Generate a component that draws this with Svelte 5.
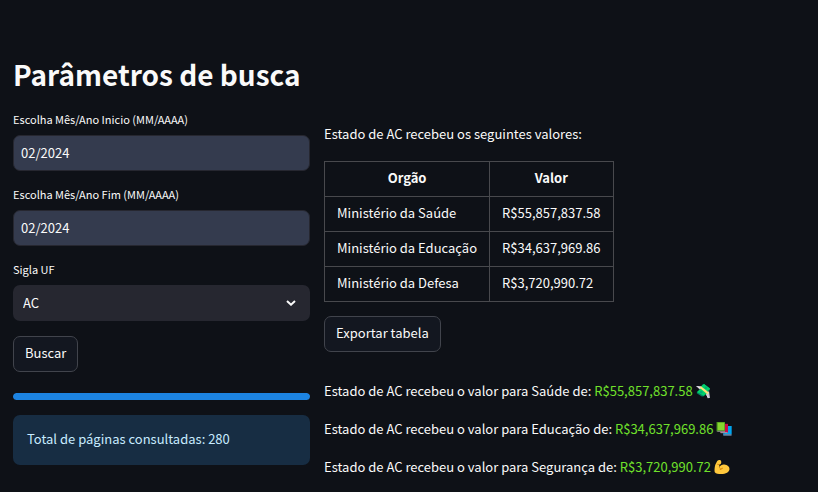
<script lang="ts">
	interface Orgao {
		nome: string;
		area: string;
		valor: number;
		icone: 'dinheiro' | 'livros' | 'braco';
	}

	const ufs = ['AC', 'AL', 'AM', 'AP', 'BA', 'CE', 'DF', 'ES', 'GO', 'MA', 'MG', 'MS', 'MT', 'PA', 'PB', 'PE', 'PI', 'PR', 'RJ', 'RN', 'RO', 'RR', 'RS', 'SC', 'SE', 'SP', 'TO'];

	const orgaos: Orgao[] = [
		{ nome: 'Ministério da Saúde', area: 'Saúde', valor: 55857837.58, icone: 'dinheiro' },
		{ nome: 'Ministério da Educação', area: 'Educação', valor: 34637969.86, icone: 'livros' },
		{ nome: 'Ministério da Defesa', area: 'Segurança', valor: 3720990.72, icone: 'braco' }
	];

	let inicio = $state('02/2024');
	let fim = $state('02/2024');
	let uf = $state('AC');
	let progresso = $state(100);
	let paginas = $state(280);

	function formatar(valor: number): string {
		return 'R$' + valor.toLocaleString('en-US', { minimumFractionDigits: 2 });
	}
</script>

<main class="page">
	<h1>Parâmetros de busca</h1>

	<div class="columns">
		<section class="search">
			<div class="field">
				<label for="inicio">Escolha Mês/Ano Inicio (MM/AAAA)</label>
				<input id="inicio" type="text" bind:value={inicio} />
			</div>

			<div class="field">
				<label for="fim">Escolha Mês/Ano Fim (MM/AAAA)</label>
				<input id="fim" type="text" bind:value={fim} />
			</div>

			<div class="field">
				<label for="uf">Sigla UF</label>
				<div class="select">
					<select id="uf" bind:value={uf}>
						{#each ufs as sigla}
							<option value={sigla}>{sigla}</option>
						{/each}
					</select>
					<svg class="chevron" viewBox="0 0 10 6" aria-hidden="true">
						<path d="M1 1l4 3.7L9 1" />
					</svg>
				</div>
			</div>

			<button type="button">Buscar</button>

			<div class="progress">
				<div class="bar" style="width: {progresso}%"></div>
			</div>

			<div class="alert">Total de páginas consultadas: {paginas}</div>
		</section>

		<section class="results">
			<p class="intro">Estado de {uf} recebeu os seguintes valores:</p>

			<table>
				<thead>
					<tr>
						<th>Orgão</th>
						<th>Valor</th>
					</tr>
				</thead>
				<tbody>
					{#each orgaos as orgao}
						<tr>
							<td>{orgao.nome}</td>
							<td>{formatar(orgao.valor)}</td>
						</tr>
					{/each}
				</tbody>
			</table>

			<button type="button">Exportar tabela</button>

			<div class="summary">
				{#each orgaos as orgao}
					<p>
						Estado de {uf} recebeu o valor para {orgao.area} de: <span class="value">{formatar(orgao.valor)}</span>
						{#if orgao.icone === 'dinheiro'}
							<svg class="emoji" viewBox="0 0 16 16" aria-hidden="true">
								<path fill="#c9c5d4" d="M0 3l6 .3 2 2-4 1.5zM9 10l4-2 1 7-2-.3z" />
								<path fill="#f3f0f7" d="M0 3l5 1.2-1 1zM10 11l3 4-1.2.2z" />
								<path fill="#008463" d="M6.5 1.5L8 1l6 4.4v1.4l-3 3.2-6-5z" />
								<path fill="#00d26a" d="M6.3 2.2L8 1l6 4.4-2.7 3.2-6-4z" />
								<path fill="#008463" d="M.8 9.5l4-3.7 6 4.8-3 2.6-2 .2-5-3.1z" />
								<path fill="#00d26a" d="M1 9l3.8-3.4 6 4.6-3.3 2.6z" />
								<path fill="#f9e37a" d="M3.3 4.6l2-1.2 7.3 5.9-1 2.1z" />
								<circle cx="9.8" cy="4.7" r="1.2" fill="#00a878" />
								<circle cx="5.2" cy="9.3" r="1.3" fill="#00a878" />
							</svg>
						{:else if orgao.icone === 'livros'}
							<svg class="emoji" viewBox="0 0 16 16" aria-hidden="true">
								<path fill="#0074ba" d="M7 5h8.5v9.5H7z" />
								<path fill="#00a6ed" d="M8.5 5h7v8h-7z" />
								<path fill="#8f8c9c" d="M7.5 13.3h8v1.2h-8z" />
								<path fill="#990838" d="M4 2.8h8v9.2H4z" />
								<path fill="#ca0b4a" d="M6 3h6v8.3H6z" />
								<path fill="#998ea4" d="M4.5 11h7.2v1.2H4.5z" />
								<path fill="#44911b" d="M.5 1H9v9.5H.5z" />
								<path fill="#86d72f" d="M1.6 1.6h6.8v7.6H1.6z" />
								<path fill="#998ea4" d="M1.3 9.8H9v.9H1.3z" />
							</svg>
						{:else}
							<svg class="emoji" viewBox="0 0 16 16" aria-hidden="true">
								<path
									fill="#ffc83d"
									d="M3.2 2C4 1 6 .8 6.7 1.5c.8.8.8 2.8 0 3.6-.4.4-1.1.5-1.6.5l.4 2.5c.9-1.8 2.6-2.7 4.8-2.5 3.2.2 5.2 2.1 5.2 4.3 0 3-3.8 5-8.2 5-3 0-5.5-.5-6.3-1.5C.2 12.4.6 8.2 1.3 5.7z"
								/>
								<path fill="none" stroke="#d67d00" stroke-width=".8" stroke-linecap="round" d="M3.6 5.3l1.5.3M5.4 8.2c.1 1 .7 1.8 1.7 2.1M8.6 9.2c-1.2 0-2 .6-2.5 1.5" />
							</svg>
						{/if}
					</p>
				{/each}
			</div>
		</section>
	</div>
</main>

<style>
	:global(body) {
		background: #0e1117;
		color: #fafafa;
		font-family: 'Source Sans Pro', 'Noto Sans CJK SC', sans-serif;
		font-size: 13px;
		line-height: 22px;
	}

	.page {
		padding: 54px 13px 0;
	}

	h1 {
		margin: 0 0 17px;
		font-size: 28px;
		font-weight: 600;
		line-height: 40px;
	}

	p {
		margin: 0;
	}

	.columns {
		display: grid;
		grid-template-columns: 21fr 34fr;
		gap: 14px;
	}

	.search,
	.results {
		display: flex;
		flex-direction: column;
		align-items: flex-start;
	}

	.search {
		gap: 15px;
	}

	.results {
		gap: 14px;
	}

	.field {
		width: 100%;
	}

	label {
		display: block;
		margin-bottom: 8px;
		font-size: 11px;
		line-height: 16px;
	}

	input,
	select,
	button {
		box-sizing: border-box;
		height: 36px;
		border-radius: 7px;
		color: inherit;
		font: inherit;
	}

	input {
		display: block;
		width: 100%;
		padding: 0 7px 2px;
		border: 1px solid #262730;
		background: #343b4e;
	}

	.select {
		position: relative;
	}

	select {
		display: block;
		width: 100%;
		padding: 0 10px;
		border: none;
		background: #262730;
		appearance: none;
	}

	.chevron {
		position: absolute;
		top: 15px;
		right: 14px;
		width: 10px;
		height: 6px;
		fill: none;
		stroke: #fafafa;
		stroke-width: 2;
		pointer-events: none;
	}

	button {
		padding: 0 11px 2px;
		border: 1px solid #41444c;
		background: #131720;
		cursor: pointer;
	}

	.progress {
		width: 100%;
		height: 7px;
		margin-top: 6px;
		border-radius: 4px;
		background: #262730;
		overflow: hidden;
	}

	.bar {
		height: 100%;
		border-radius: 4px;
		background: #1c83e1;
	}

	.alert {
		box-sizing: border-box;
		width: 100%;
		padding: 13px 14px 15px;
		border-radius: 7px;
		background: #172d43;
		color: #c7ebff;
	}

	.intro {
		margin: 13px 0 3px;
		line-height: 20px;
	}

	table {
		border-collapse: collapse;
	}

	th,
	td {
		padding: 5px 12px 7px;
		border: 1px solid #48494d;
		text-align: left;
	}

	th {
		font-weight: 700;
		text-align: center;
	}

	.summary {
		display: flex;
		flex-direction: column;
		gap: 16px;
		margin-top: 14px;
	}

	.value {
		color: #70e02b;
	}

	.emoji {
		width: 16px;
		height: 16px;
		vertical-align: -3px;
	}
</style>
